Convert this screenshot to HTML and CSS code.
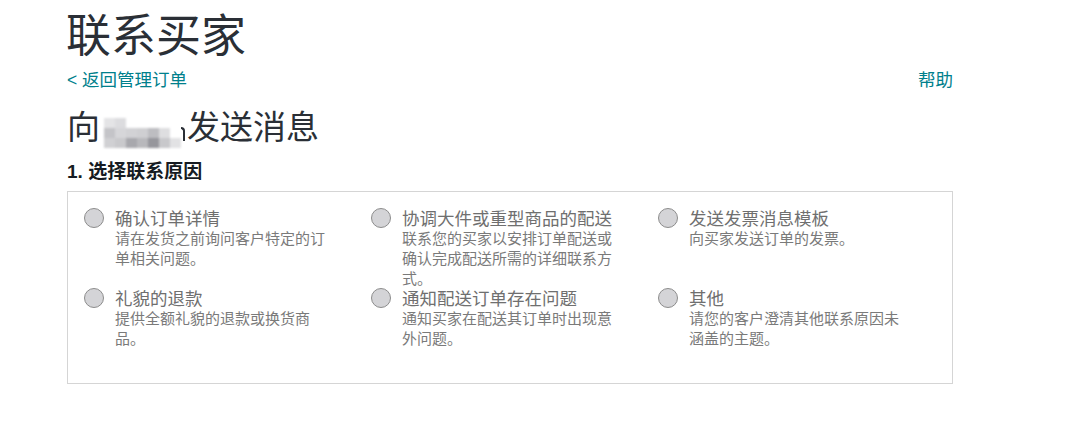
FILE: index.html
```html
<!DOCTYPE html>
<html lang="zh-CN">
<head>
<meta charset="utf-8">
<title>联系买家</title>
<link rel="stylesheet" href="styles.css">
</head>
<body>
<div class="page">
  <h1 class="title">联系买家</h1>
  <div class="nav-row">
    <a class="link" href="#">&lt; 返回管理订单</a>
    <a class="link" href="#">帮助</a>
  </div>
  <h2 class="heading">向<span class="blur" aria-hidden="true"><span class="b r1 c1"></span><span class="b r1 c2"></span><span class="b r2 c1"></span><span class="b r2 c2"></span><span class="b r2 c3"></span><span class="b r2 c4"></span><span class="b r2 c5"></span><span class="b r2 c6"></span><span class="b r3 c1"></span><span class="b r3 c2"></span><span class="b r3 c3"></span><span class="b r3 c4"></span><span class="b r3 c5"></span><span class="b r3 c6"></span><span class="b r3 c7"></span></span><span class="stub" aria-hidden="true"></span>发送消息</h2>
  <h3 class="section"><span class="num">1.</span> 选择联系原因</h3>
  <div class="reasons">
    <label class="reason">
      <span class="radio"></span>
      <span class="text">
        <span class="label">确认订单详情</span>
        <span class="desc">请在发货之前询问客户特定的订单相关问题。</span>
      </span>
    </label>
    <label class="reason">
      <span class="radio"></span>
      <span class="text">
        <span class="label">协调大件或重型商品的配送</span>
        <span class="desc">联系您的买家以安排订单配送或确认完成配送所需的详细联系方式。</span>
      </span>
    </label>
    <label class="reason">
      <span class="radio"></span>
      <span class="text">
        <span class="label">发送发票消息模板</span>
        <span class="desc">向买家发送订单的发票。</span>
      </span>
    </label>
    <label class="reason">
      <span class="radio"></span>
      <span class="text">
        <span class="label">礼貌的退款</span>
        <span class="desc">提供全额礼貌的退款或换货商品。</span>
      </span>
    </label>
    <label class="reason">
      <span class="radio"></span>
      <span class="text">
        <span class="label">通知配送订单存在问题</span>
        <span class="desc">通知买家在配送其订单时出现意外问题。</span>
      </span>
    </label>
    <label class="reason">
      <span class="radio"></span>
      <span class="text">
        <span class="label">其他</span>
        <span class="desc">请您的客户澄清其他联系原因未涵盖的主题。</span>
      </span>
    </label>
  </div>
</div>
</body>
</html>
```
FILE: styles.css
```css
html, body {
  margin: 0;
  padding: 0;
  background: #ffffff;
}

body {
  font-family: "Liberation Sans", "Noto Sans CJK SC", sans-serif;
  color: #232f3e;
}

.page {
  width: 886px;
  margin-left: 67px;
}

.title {
  margin: 12px 0 0 -1px;
  font-size: 45px;
  line-height: 50px;
  font-weight: 400;
  color: #2a2f36;
}

.nav-row {
  margin-top: 6px;
  display: flex;
  justify-content: space-between;
  align-items: center;
  line-height: 24px;
}

.link {
  font-size: 17.5px;
  color: #00808c;
  text-decoration: none;
}

.heading {
  margin: 16px 0 0 0;
  font-size: 33px;
  line-height: 40px;
  font-weight: 400;
  color: #2a2f36;
  display: flex;
  align-items: center;
}

.blur {
  display: inline-grid;
  grid-template-columns: repeat(7, 11px);
  grid-template-rows: repeat(3, 10px);
  width: 77px;
  height: 30px;
  margin: 10px 0 0 4px;
  filter: blur(1.2px);
}

.b { display: block; }
.r1 { grid-row: 1; }
.r2 { grid-row: 2; }
.r3 { grid-row: 3; }
.c1 { grid-column: 1; }
.c2 { grid-column: 2; }
.c3 { grid-column: 3; }
.c4 { grid-column: 4; }
.c5 { grid-column: 5; }
.c6 { grid-column: 6; }
.c7 { grid-column: 7; }

.r1.c1 { background: #e4e4e6; }
.r1.c2 { background: #dcdcdf; }
.r2.c1 { background: #c4c4c8; }
.r2.c2 { background: #d6d6d9; }
.r2.c3 { background: #d2d2d5; }
.r2.c4 { background: #cfcfd2; }
.r2.c5 { background: #bdbdc1; }
.r2.c6 { background: #dedee0; }
.r3.c1 { background: #d0d0d3; }
.r3.c2 { background: #c9c9cc; }
.r3.c3 { background: #a8a8ad; }
.r3.c4 { background: #b8b8bc; }
.r3.c5 { background: #96969c; }
.r3.c6 { background: #c8c8cb; }
.r3.c7 { background: #e2e2e4; }

.stub {
  display: inline-block;
  width: 4px;
  height: 14px;
  margin: 12px 2px 0 0;
  border-top: 2px solid #2a2f36;
  border-right: 2px solid #2a2f36;
  border-top-right-radius: 5px;
  box-sizing: border-box;
}

.section {
  margin: 12px 0 0 0;
  font-size: 19px;
  line-height: 24px;
  font-weight: 700;
  color: #161b22;
}

.num {
  font-family: "Liberation Sans", sans-serif;
}

.reasons {
  margin-top: 7px;
  border: 1px solid #d5d5d5;
  padding: 16px 0 35px 16px;
  display: grid;
  grid-template-columns: repeat(3, 287px);
}

.reason {
  display: flex;
  align-items: flex-start;
  cursor: pointer;
}

.radio {
  flex: none;
  width: 18px;
  height: 18px;
  margin-top: 0px;
  margin-right: 11px;
  border: 1px solid #8c8c8c;
  border-radius: 50%;
  background: #d4d4d7;
}

.text {
  display: flex;
  flex-direction: column;
  width: 218px;
  font-family: "Noto Sans CJK SC", sans-serif;
}

.label {
  font-size: 17.5px;
  line-height: 20px;
  color: #6f6f6f;
}

.desc {
  font-size: 15px;
  line-height: 20px;
  color: #7a7a7a;
}
```
